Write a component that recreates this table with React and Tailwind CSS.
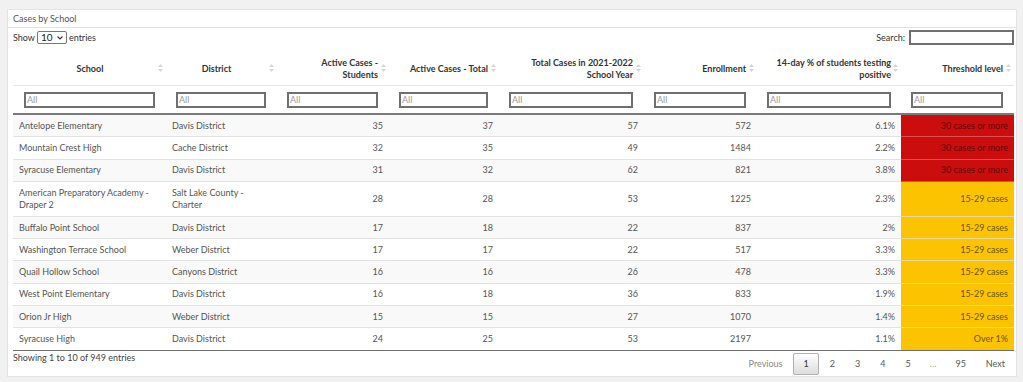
import React from "react";

const rows = [
  ["Antelope Elementary", "Davis District", "35", "37", "57", "572", "6.1%", "30 cases or more", "r"],
  ["Mountain Crest High", "Cache District", "32", "35", "49", "1484", "2.2%", "30 cases or more", "r"],
  ["Syracuse Elementary", "Davis District", "31", "32", "62", "821", "3.8%", "30 cases or more", "r"],
  ["American Preparatory Academy - Draper 2", "Salt Lake County - Charter", "28", "28", "53", "1225", "2.3%", "15-29 cases", "y"],
  ["Buffalo Point School", "Davis District", "17", "18", "22", "837", "2%", "15-29 cases", "y"],
  ["Washington Terrace School", "Weber District", "17", "17", "22", "517", "3.3%", "15-29 cases", "y"],
  ["Quail Hollow School", "Canyons District", "16", "16", "26", "478", "3.3%", "15-29 cases", "y"],
  ["West Point Elementary", "Davis District", "16", "18", "36", "833", "1.9%", "15-29 cases", "y"],
  ["Orion Jr High", "Weber District", "15", "15", "27", "1070", "1.4%", "15-29 cases", "y"],
  ["Syracuse High", "Davis District", "24", "25", "53", "2197", "1.1%", "Over 1%", "y"],
];

function SortIcon() {
  return (
    <svg
      width="5"
      height="9"
      viewBox="0 0 5 9"
      className="absolute right-[3px] top-[calc(50%+2px)] -translate-y-1/2"
    >
      <polygon points="0,3.6 2.5,0.4 5,3.6" fill="#d6d6d6" />
      <polygon points="0,5.4 2.5,8.6 5,5.4" fill="#d6d6d6" />
    </svg>
  );
}

function Th({ children, className }) {
  return (
    <th
      className={
        "relative h-[39px] pt-[5px] align-middle text-[9px] font-bold leading-[11.5px] text-[#333] border-b border-[#e6e6e6] " +
        className
      }
    >
      {children}
      <SortIcon />
    </th>
  );
}

function FilterCell({ className }) {
  return (
    <td className={"h-[29px] border-b-2 border-[#7a7a7a] align-middle " + className}>
      <div className="h-[16px] w-full border-2 border-[#707070] bg-white pl-[1px] text-[9px] leading-[12px] text-[#9a9a9a]">
        All
      </div>
    </td>
  );
}

export default function App() {
  return (
    <div className="min-h-[382px] bg-[#f1f1f1] pl-[7px] pt-[9px] font-['Lato','Liberation_Sans',sans-serif]">
      <div className="h-[368px] w-[1010px] border border-[#e4e4e4] bg-white">
        <div className="h-[18px] border-b border-[#e2e2e2] px-[5px] text-[9px] leading-[17px] text-[#555]">
          Cases by School
        </div>
        <div className="pl-[5px] pr-[2px]">
          <div className="flex h-[19px] items-center justify-between text-[9px] text-[#333]">
            <div className="flex items-center">
              <span>Show</span>
              <div className="mx-[2px] flex h-[13px] w-[30px] items-center justify-between rounded-[2px] border border-[#767676] pl-[3px] pr-[3px] text-[10px] leading-[11px] text-[#222]">
                <span>10</span>
                <svg width="6" height="4" viewBox="0 0 6 4">
                  <polyline points="0.5,0.5 3,3 5.5,0.5" fill="none" stroke="#333" strokeWidth="1.1" />
                </svg>
              </div>
              <span>entries</span>
            </div>
            <div className="flex items-center">
              <span className="mr-[4px]">Search:</span>
              <div className="h-[15px] w-[105px] border-2 border-[#707070] bg-white" />
            </div>
          </div>
          <table className="w-[1001px] table-fixed border-separate border-spacing-0">
            <colgroup>
              <col className="w-[153px]" />
              <col className="w-[111px]" />
              <col className="w-[112px]" />
              <col className="w-[110px]" />
              <col className="w-[145px]" />
              <col className="w-[113px]" />
              <col className="w-[144px]" />
              <col className="w-[113px]" />
            </colgroup>
            <thead>
              <tr>
                <Th className="pl-[12px] pr-[11px] text-center">School</Th>
                <Th className="pl-[10px] pr-[20px] text-center">District</Th>
                <Th className="pl-[8px] pr-[11px] text-right">
                  Active Cases -<br />Students
                </Th>
                <Th className="pl-[8px] pr-[11px] text-right">Active Cases - Total</Th>
                <Th className="pl-[8px] pr-[11px] text-right">
                  Total Cases in 2021-2022
                  <br />
                  School Year
                </Th>
                <Th className="pl-[8px] pr-[11px] text-right">Enrollment</Th>
                <Th className="pl-[8px] pr-[10px] text-right">
                  14-day % of students testing
                  <br />
                  positive
                </Th>
                <Th className="pl-[8px] pr-[11px] text-right">Threshold level</Th>
              </tr>
              <tr>
                <FilterCell className="pl-[11px] pr-[11px]" />
                <FilterCell className="pl-[10px] pr-[11px]" />
                <FilterCell className="pl-[10px] pr-[11px]" />
                <FilterCell className="pl-[10px] pr-[11px]" />
                <FilterCell className="pl-[10px] pr-[11px]" />
                <FilterCell className="pl-[10px] pr-[11px]" />
                <FilterCell className="pl-[10px] pr-[10px]" />
                <FilterCell className="pl-[10px] pr-[11px]" />
              </tr>
            </thead>
            <tbody>
              {rows.map((r, i) => {
                const last = i === rows.length - 1;
                const tall = i === 3;
                const rowBg = i % 2 === 0 ? "bg-[#f9f9f9]" : "bg-white";
                const h = tall ? "h-[35px] " : "h-[22.3px] ";
                const bd = last ? "border-b border-[#6f6f6f]" : "border-b border-[#e2e2e2]";
                const base =
                  h + "px-[6px] py-[4px] text-[9px] leading-[12px] text-[#555] align-middle " + bd;
                const thr =
                  r[8] === "r"
                    ? "bg-[#cc0d0d] text-[#5e0c0c] "
                    : "bg-[#fcc300] text-[#6b5610] ";
                const thrBd = last
                  ? "border-b border-[#6f6f6f]"
                  : r[8] === "r"
                  ? "border-b border-[#d9504f]"
                  : "border-b border-[#e8d9a0]";
                return (
                  <tr key={i} className={rowBg}>
                    <td className={base}>{r[0]}</td>
                    <td className={base}>{r[1]}</td>
                    <td className={base + " text-right"}>{r[2]}</td>
                    <td className={base + " text-right"}>{r[3]}</td>
                    <td className={base + " text-right"}>{r[4]}</td>
                    <td className={base + " text-right"}>{r[5]}</td>
                    <td className={base + " text-right"}>{r[6]}</td>
                    <td
                      className={
                        h +
                        "px-[6px] py-[4px] text-right text-[9px] leading-[12px] align-middle " +
                        thr +
                        thrBd
                      }
                    >
                      {r[7]}
                    </td>
                  </tr>
                );
              })}
            </tbody>
          </table>
          <div className="flex items-start justify-between">
            <div className="pt-[1px] text-[9px] leading-[12px] text-[#444]">
              Showing 1 to 10 of 949 entries
            </div>
            <div className="mt-[2px] flex items-center text-[9px] leading-[20px]">
              <span className="ml-[2px] border border-transparent px-[8px] text-[#888]">Previous</span>
              <span className="ml-[2px] rounded-[2px] border border-[#b0b0b0] bg-gradient-to-b from-white to-[#dcdcdc] px-[9px] text-[#333]">
                1
              </span>
              <span className="ml-[2px] border border-transparent px-[8px] text-[#555]">2</span>
              <span className="ml-[2px] border border-transparent px-[8px] text-[#555]">3</span>
              <span className="ml-[2px] border border-transparent px-[8px] text-[#555]">4</span>
              <span className="ml-[2px] border border-transparent px-[8px] text-[#555]">5</span>
              <span className="ml-[2px] px-[8px] text-[#aaa]">…</span>
              <span className="ml-[2px] border border-transparent px-[8px] text-[#555]">95</span>
              <span className="ml-[2px] border border-transparent px-[8px] text-[#555]">Next</span>
            </div>
          </div>
        </div>
      </div>
    </div>
  );
}
